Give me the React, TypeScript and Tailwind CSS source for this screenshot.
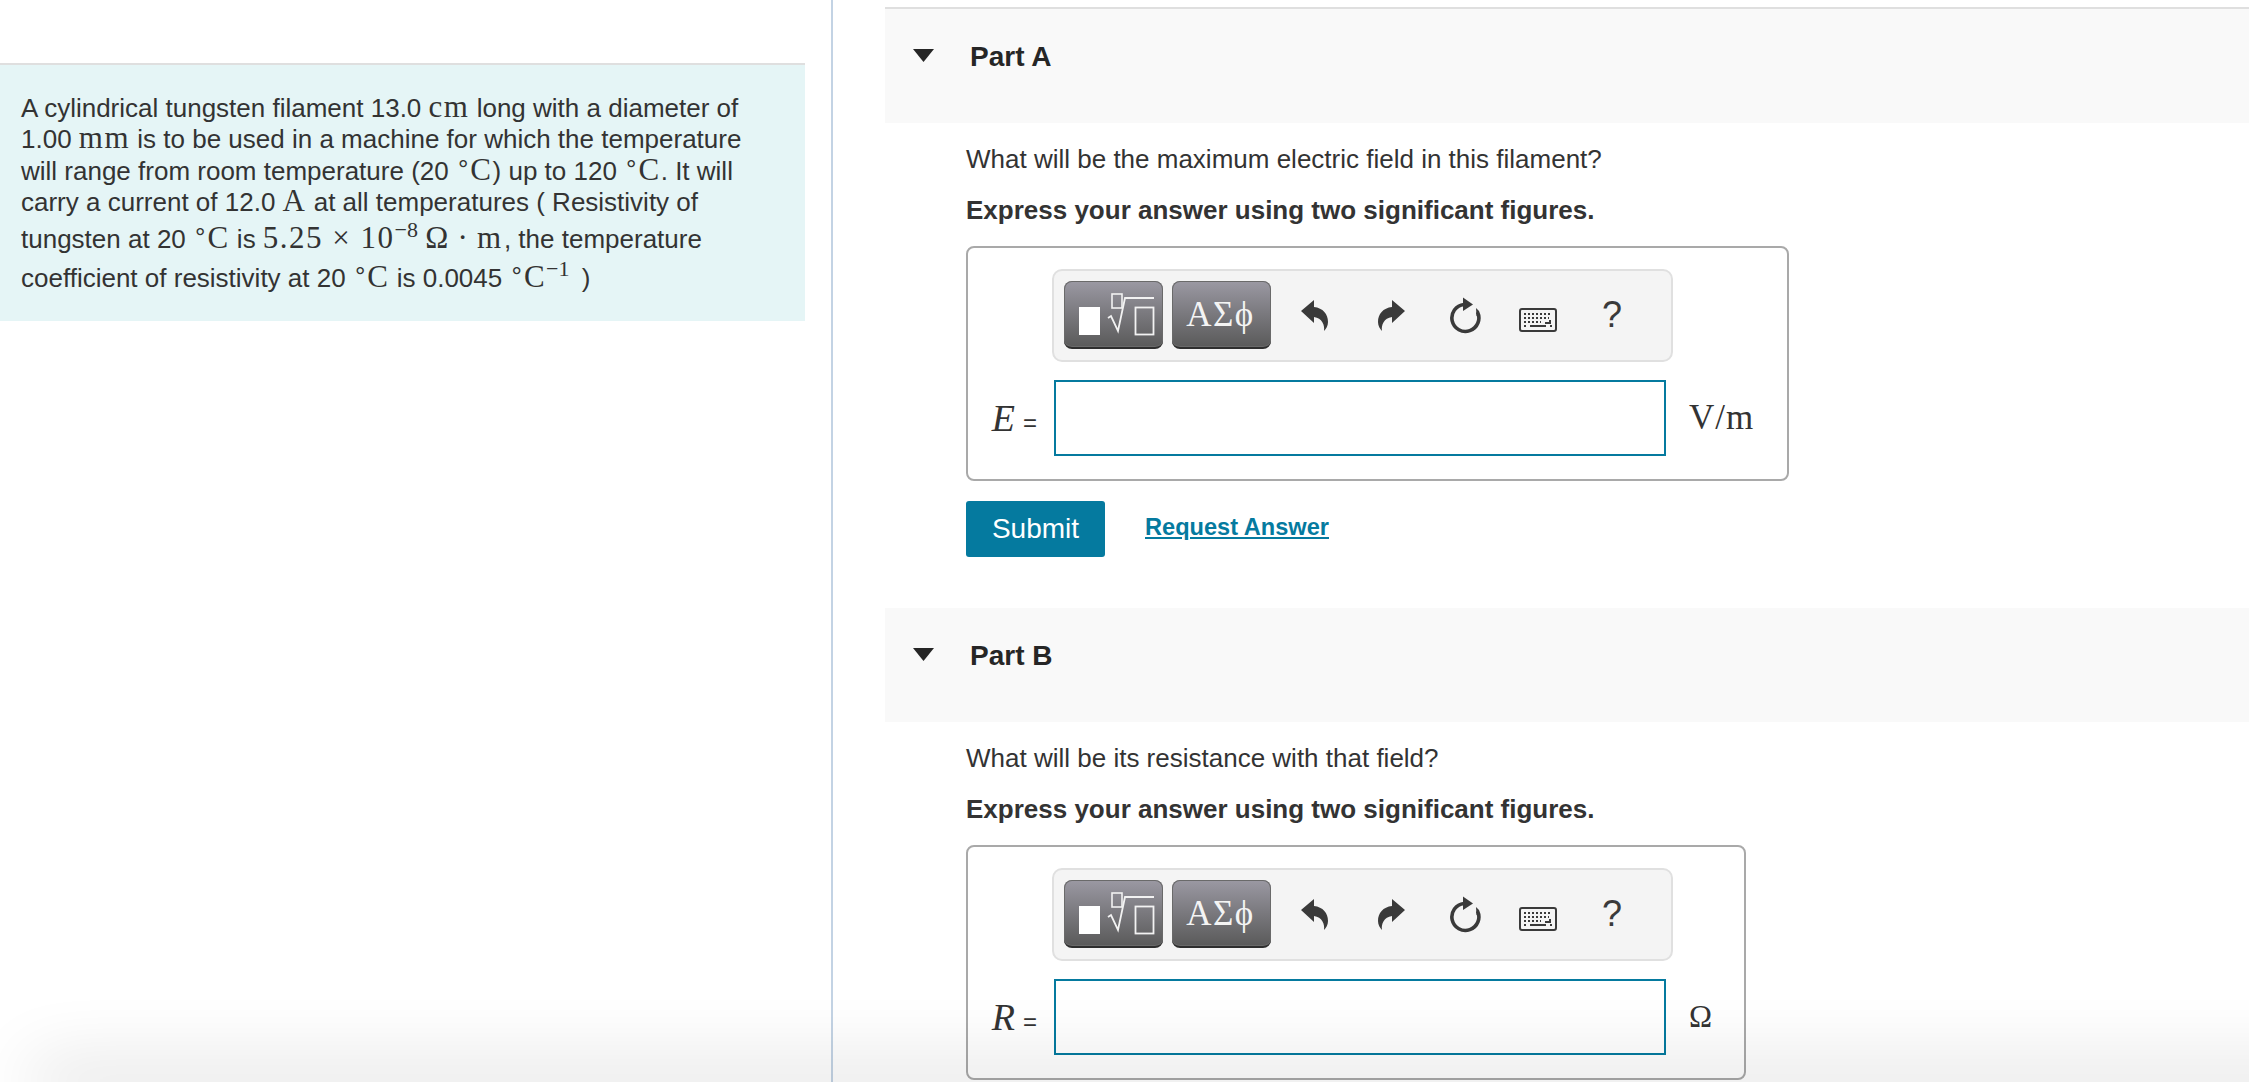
const serif = "font-['Liberation_Serif',serif]";

function M({ children }: { children: React.ReactNode }) {
  return <span className="font-['Liberation_Serif',serif] text-[31px] leading-[0] tracking-[1.5px]">{children}</span>;
}

function Sup({ children }: { children: React.ReactNode }) {
  return <sup className="relative top-[-11px] align-baseline font-['Liberation_Serif',serif] text-[22px] leading-[0]">{children}</sup>;
}

function Deg() {
  return <span className="relative top-[-2px] mx-[2px] font-['Liberation_Sans',sans-serif] text-[26px] leading-[0]">°</span>;
}

function PartHeader({ title }: { title: string }) {
  return (
    <div className="flex h-[114px] items-start bg-[#f9f9f9] pl-[28px] pt-[39px]">
      <svg className="mt-[1px] h-[13px] w-[21px]" viewBox="0 0 21 13">
        <path d="M0 0H21L10.5 13Z" fill="#262626" />
      </svg>
      <span className="ml-[36px] mt-[-7px] text-[28px] font-bold leading-[32px] text-[#262626]">{title}</span>
    </div>
  );
}

function UndoIcon({ flip }: { flip?: boolean }) {
  return (
    <svg className={flip ? "h-[31px] w-[27px] -scale-x-100" : "h-[31px] w-[27px]"} viewBox="0 0 27 31">
      <path d="M0 11 13 0V7C22 8 27 14 27 22 27 26 25 29 23 31 24 25 21 18 13 17V23Z" fill="#3a3a3a" />
    </svg>
  );
}

function ReloadIcon() {
  return (
    <svg className="h-[37px] w-[33px]" viewBox="0 0 33 37">
      <path d="M16 7.5A13.5 13.5 0 1 0 29.5 15" fill="none" stroke="#3a3a3a" strokeWidth="3.6" />
      <path d="M15 0.5 25 7.5 15 14Z" fill="#3a3a3a" />
      <path d="M28 11 31 14 31 19 28.5 19Z" fill="#3a3a3a" />
    </svg>
  );
}

function KeyboardIcon() {
  return (
    <svg className="h-[24px] w-[38px]" viewBox="0 0 38 24">
      <rect x="1" y="1" width="36" height="22" rx="2" fill="none" stroke="#3a3a3a" strokeWidth="2" />
      <path d="M5 6H33M5 10H30M5 14H22" stroke="#3a3a3a" strokeWidth="2" strokeDasharray="2 2" fill="none" />
      <path d="M11 18H27M31 12V15H26M5 18H7M31 18H33" stroke="#3a3a3a" strokeWidth="2" fill="none" />
    </svg>
  );
}

function Toolbar() {
  return (
    <div className="ml-[84px] flex h-[93px] w-[621px] items-center rounded-[10px] border-2 border-[#e0e0e0] bg-[#f4f4f4] pb-[1px] pl-[10px]">
      <div className="h-[68px] w-[99px] rounded-[8px] border-b-2 border-[#2e2e2e] bg-gradient-to-b from-[#9b99a3] to-[#5a5a5a] shadow-[inset_0_0_0_1px_#6a6a6a]">
        <svg className="h-[66px] w-[99px]" viewBox="0 0 99 66">
          <rect x="15" y="26" width="21" height="28" fill="#fff" />
          <rect x="48" y="13" width="10" height="14" fill="none" stroke="#f2f2f2" strokeWidth="1.6" />
          <path d="M44 37 47 35 54 50 61 17H90" fill="none" stroke="#f2f2f2" strokeWidth="1.8" />
          <rect x="71.5" y="26.5" width="18" height="27" fill="none" stroke="#f2f2f2" strokeWidth="1.8" />
        </svg>
      </div>
      <div className="ml-[9px] flex h-[68px] w-[99px] items-center justify-center rounded-[8px] border-b-2 border-[#2e2e2e] bg-gradient-to-b from-[#9b99a3] to-[#5a5a5a] pr-[2px] shadow-[inset_0_0_0_1px_#6a6a6a]">
        <span className={`${serif} text-[35px] leading-none tracking-[1.5px] text-[#f4f4f4]`}>ΑΣϕ</span>
      </div>
      <div className="ml-[30px]"><UndoIcon /></div>
      <div className="ml-[50px]"><UndoIcon flip /></div>
      <div className="ml-[43px]"><ReloadIcon /></div>
      <div className="ml-[38px] mt-[10px]"><KeyboardIcon /></div>
      <span className="ml-[45px] font-['Liberation_Sans',sans-serif] text-[36px] leading-none text-[#3a3a3a]">?</span>
    </div>
  );
}

function AnswerBox({ label, unit, boxClass, unitClass }: { label: string; unit: string; boxClass: string; unitClass: string }) {
  return (
    <div className={`${boxClass} h-[235px] rounded-[8px] border-2 border-[#a9a9a9] bg-white pt-[21px]`}>
      <Toolbar />
      <div className="mt-[18px] flex h-[76px] items-center">
        <div className="flex w-[86px] items-baseline justify-end pr-[17px] text-[#333]">
          <i className={`${serif} text-[38px] leading-none`}>{label}</i>
          <span className="ml-[8px] text-[24px] leading-none">=</span>
        </div>
        <div className="h-[76px] w-[612px] border-2 border-[#057a9f] bg-white" />
        <span className={`${serif} ml-[23px] text-[#333] ${unitClass}`}>{unit}</span>
      </div>
    </div>
  );
}

function Question({ text }: { text: string }) {
  return (
    <>
      <p className="mt-[19px] text-[26px] leading-[34px]">{text}</p>
      <p className="mt-[17px] text-[26px] font-bold leading-[34px]">Express your answer using two significant figures.</p>
    </>
  );
}

export default function App() {
  return (
    <div className="relative flex h-[1082px] w-[2249px] overflow-hidden bg-white font-['Liberation_Sans',sans-serif] text-[#333]">
      <div className="h-full w-[833px] shrink-0 border-r-2 border-[#c3d3e4] pt-[63px]">
        <div className="h-[258px] w-[805px] border-t-2 border-[#dfdfdf] bg-[#e5f5f6] pl-[21px] pt-[27.5px] text-[26px] leading-[31.5px]">
          A cylindrical tungsten filament 13.0 <M>cm</M> long with a diameter of<br />
          1.00 <M>mm</M> is to be used in a machine for which the temperature<br />
          will range from room temperature (20 <Deg /><M>C</M>) up to 120 <Deg /><M>C</M>. It will<br />
          carry a current of 12.0 <M>A</M> at all temperatures ( Resistivity of<br />
          <div className="mt-[5.5px]">
            tungsten at 20 <Deg /><M>C</M> is <M>5.25 × 10</M><Sup>−8</Sup> <M>Ω{"\u2009"}·{"\u2009"}m</M> <span className="ml-[-6px]">, the temperature</span>
          </div>
          <div className="mt-[7.5px]">
            coefficient of resistivity at 20 <Deg /><M>C</M> is 0.0045 <Deg /><M>C</M><Sup>−1</Sup> <span className="ml-[5px]">)</span>
          </div>
        </div>
      </div>

      <div className="ml-[52px] flex-1 pt-[7px]">
        <div className="border-t-2 border-[#dfdfdf]">
          <PartHeader title="Part A" />
        </div>
        <div className="pl-[81px]">
          <Question text="What will be the maximum electric field in this filament?" />
          <div className="mt-[19px]">
            <AnswerBox label="E" unit="V/m" boxClass="w-[823px]" unitClass="text-[35px] tracking-[1px]" />
          </div>
          <div className="mt-[20px] flex items-center">
            <button className="h-[56px] w-[139px] rounded-[3px] bg-[#057a9f] text-[28px] text-white">Submit</button>
            <a className="mb-[2px] ml-[40px] text-[23.6px] font-bold text-[#057a9f] underline">Request Answer</a>
          </div>
        </div>
        <div className="mt-[51px]">
          <PartHeader title="Part B" />
        </div>
        <div className="pl-[81px]">
          <Question text="What will be its resistance with that field?" />
          <div className="mt-[19px]">
            <AnswerBox label="R" unit="Ω" boxClass="w-[780px]" unitClass="text-[31px]" />
          </div>
        </div>
      </div>

      <div className="pointer-events-none absolute bottom-0 left-[50px] right-[-100px] h-0 shadow-[0_0_70px_18px_rgba(0,0,0,0.14)]" />
    </div>
  );
}
